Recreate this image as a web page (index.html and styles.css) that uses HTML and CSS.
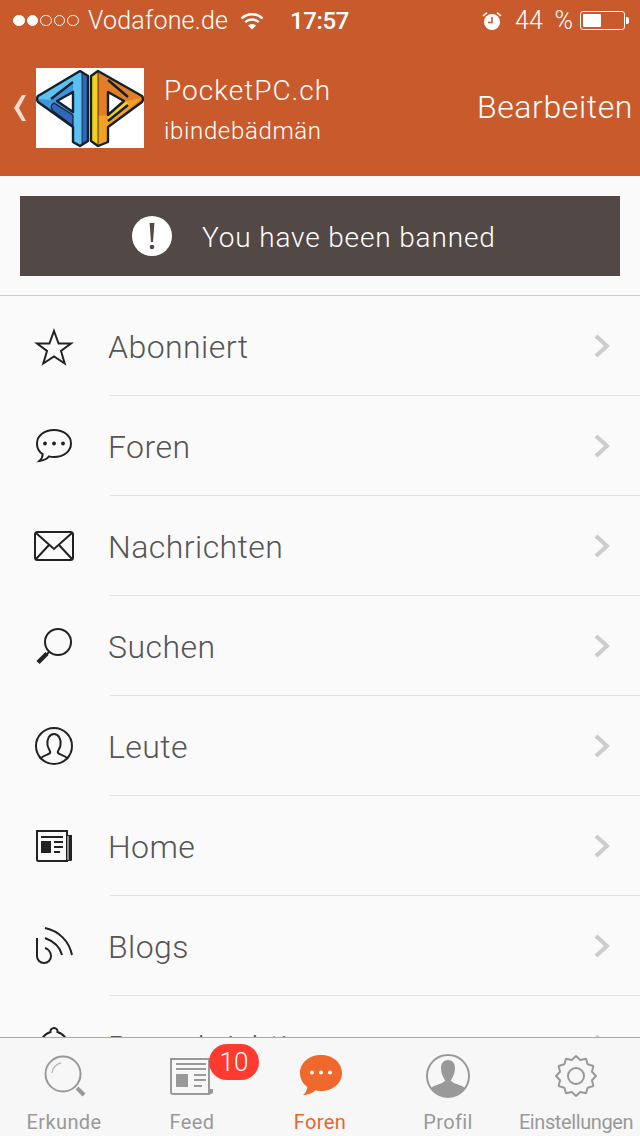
FILE: index.html
```html
<!DOCTYPE html>
<html lang="de">
<head>
<meta charset="utf-8">
<title>PocketPC.ch</title>
<link rel="stylesheet" href="styles.css">
</head>
<body>
<div class="app">
  <header class="header">
    <div class="status">
      <div class="signal"><i class="dot on"></i><i class="dot on"></i><i class="dot"></i><i class="dot"></i><i class="dot"></i></div>
      <span class="carrier">Vodafone.de</span>
      <svg class="wifi" viewBox="0 0 24 18"><path d="M1.500 6.500a15 15 0 0 1 21 0" fill="none" stroke="#fff" stroke-width="2.400"/><path d="M5.200 10.200a10 10 0 0 1 13.600 0" fill="none" stroke="#fff" stroke-width="2.400"/><path d="M12 17.500l-4-4a6 6 0 0 1 8 0z" fill="#fff"/></svg>
      <span class="time">17:57</span>
      <svg class="alarm" viewBox="0 0 20 20"><circle cx="10" cy="11" r="8" fill="#fff"/><path d="M10 6v5.500H6" fill="none" stroke="#c95a2b" stroke-width="1.600"/><path d="M1 5l4-3.400M19 5l-4-3.400" stroke="#fff" stroke-width="1.600" fill="none"/></svg>
      <span class="pct">44 %</span>
      <div class="battery"><div class="battery-fill"></div></div>
      <div class="battery-nub"></div>
    </div>
    <div class="nav">
      <svg class="back" viewBox="0 0 14 26"><path d="M9 0h4L6 13l7 13H9L1 13z" fill="#f9dccd"/></svg>
      <svg class="logo" viewBox="0 0 108 80">
        <rect width="108" height="80" fill="#fff"/>
        <path d="M44 3L2 28q-2 3 0 6l35 25v15l7 4 8-5V8z" fill="#3f95dc"/>
        <path d="M44 3L2 28q-1 2 0 3l13 1 22-18v62l7 2 2-1V5z" fill="#5cc0f2"/>
        <path d="M46 5l6 3v65l-6 4z" fill="#2f68b9"/>
        <path d="M18 35l19 12v11L17 43q-4-5 1-8z" fill="#2f68b9" stroke="#14202b" stroke-width="1.200"/>
        <path d="M37 24L21 33l16 11z" fill="#fff"/>
        <path d="M44 3L2 28q-2 3 0 6l35 25v15l7 4 8-5V8zM37 24L21 33l16 11zM37 14L15 31" fill="none" stroke="#14202b" stroke-width="2.400" stroke-linejoin="round"/>
        <path d="M46 5v72" stroke="#14202b" stroke-width=".8"/>
        <path d="M62 3l44 25q2 3 0 6L72 59v15l-10 4-7-5V8z" fill="#e37e27"/>
        <path d="M55 8l7-5v75l-7-5z" fill="#f6cf1f"/>
        <path d="M106 30L72 59v15l-10 4V48l10-1 18-14z" fill="#f3a122"/>
        <path d="M72 47l17-13q3 0 3 3L72 53z" fill="#f6cf1f"/>
        <path d="M72 24l16 9-16 14z" fill="#fff"/>
        <path d="M62 3l44 25q2 3 0 6L72 59v15l-10 4-7-5V8zM72 24l16 9-16 14zM72 12l20 17M72 53l20-16" fill="none" stroke="#14202b" stroke-width="2.400" stroke-linejoin="round"/>
        <path d="M62 4v73" stroke="#14202b" stroke-width=".8"/>
      </svg>
      <div class="titles">
        <div class="title">PocketPC.ch</div>
        <div class="subtitle">ibindebädmän</div>
      </div>
      <div class="edit">Bearbeiten</div>
    </div>
  </header>

  <main class="main">
    <div class="banner-wrap">
      <div class="banner">
        <svg class="alert" viewBox="0 0 40 40"><circle cx="20" cy="20" r="20" fill="#fff"/><path d="M17.600 7h4.800l-1.400 19h-2z" fill="#524846"/><circle cx="20" cy="31" r="2.300" fill="#524846"/></svg>
        <span class="banner-text">You have been banned</span>
      </div>
    </div>
    <ul class="list">
      <li class="row">
        <svg class="row-icon" viewBox="0 0 48 48"><path d="M24 9l4.600 12.500H41L31 29l3.700 12.500L24 34.500l-10.700 7L17 29 7 21.500h12.400z" fill="none" stroke="#222" stroke-width="2"/></svg>
        <div class="row-body"><span class="row-label">Abonniert</span><svg class="chev" viewBox="0 0 18 26"><path d="M3 3l11 10L3 23" fill="none" stroke="#ccc" stroke-width="4"/></svg></div>
      </li>
      <li class="row">
        <svg class="row-icon" viewBox="0 0 48 48"><path d="M24 8c9.500 0 17 5.600 17 13.500S33.500 35 24 35c-2 0-3.500-.2-5-.6-2.300 2.700-5.800 4.200-9.600 4.600 2-1.800 3.200-4 3.300-6.800C8.800 29.800 7 26 7 21.500 7 13.600 14.500 8 24 8z" fill="none" stroke="#222" stroke-width="2"/><circle cx="15" cy="21.500" r="1.900" fill="#222"/><circle cx="24" cy="21.500" r="1.900" fill="#222"/><circle cx="33" cy="21.500" r="1.900" fill="#222"/></svg>
        <div class="row-body"><span class="row-label">Foren</span><svg class="chev" viewBox="0 0 18 26"><path d="M3 3l11 10L3 23" fill="none" stroke="#ccc" stroke-width="4"/></svg></div>
      </li>
      <li class="row">
        <svg class="row-icon" viewBox="0 0 48 48"><rect x="5" y="10" width="38" height="28" rx="2.500" fill="none" stroke="#222" stroke-width="2"/><path d="M6 11l18 16 18-16M6 37l13-14M42 37L29 23" fill="none" stroke="#222" stroke-width="2"/></svg>
        <div class="row-body"><span class="row-label">Nachrichten</span><svg class="chev" viewBox="0 0 18 26"><path d="M3 3l11 10L3 23" fill="none" stroke="#ccc" stroke-width="4"/></svg></div>
      </li>
      <li class="row">
        <svg class="row-icon" viewBox="0 0 48 48"><circle cx="28" cy="20" r="13" fill="none" stroke="#222" stroke-width="2"/><path d="M19 30l-3 3" stroke="#222" stroke-width="2"/><path d="M17 31.500L8 40.500" stroke="#222" stroke-width="4.500"/></svg>
        <div class="row-body"><span class="row-label">Suchen</span><svg class="chev" viewBox="0 0 18 26"><path d="M3 3l11 10L3 23" fill="none" stroke="#ccc" stroke-width="4"/></svg></div>
      </li>
      <li class="row">
        <svg class="row-icon" viewBox="0 0 48 48"><circle cx="24" cy="24" r="18" fill="none" stroke="#222" stroke-width="2"/><path d="M10 37c3-4 8-4 10-6 1-2-2-4-2.500-8-.8-6 2-11 6.500-11s7.300 5 6.500 11c-.5 4-3.500 6-2.500 8 2 2 7 2 10 6" fill="none" stroke="#222" stroke-width="2"/></svg>
        <div class="row-body"><span class="row-label">Leute</span><svg class="chev" viewBox="0 0 18 26"><path d="M3 3l11 10L3 23" fill="none" stroke="#ccc" stroke-width="4"/></svg></div>
      </li>
      <li class="row">
        <svg class="row-icon" viewBox="0 0 48 48"><path d="M7 9h30v30H8.500Q7 39 7 37.500z" fill="none" stroke="#222" stroke-width="2"/><path d="M37 13h5v25q0 1-1 1h-4z" fill="#222"/><path d="M38 38V14" stroke="#fafafa" stroke-width="1"/><path d="M11 14h22v2H11zM24 19h9v2h-9zM24 24h9v2h-9zM24 29h6v2h-6z" fill="#222"/><rect x="11" y="19" width="10" height="12" fill="#222"/></svg>
        <div class="row-body"><span class="row-label">Home</span><svg class="chev" viewBox="0 0 18 26"><path d="M3 3l11 10L3 23" fill="none" stroke="#ccc" stroke-width="4"/></svg></div>
      </li>
      <li class="row">
        <svg class="row-icon" viewBox="0 0 48 48"><path d="M15 6c14 3 24 13 27 27" fill="none" stroke="#222" stroke-width="2"/><path d="M15 16c8 3 15 9 17 17" fill="none" stroke="#222" stroke-width="2"/><path d="M7 16v18c0 4 3 7 7 7s7-3 7-7c0-4-3-7-6-8" fill="none" stroke="#222" stroke-width="2"/></svg>
        <div class="row-body"><span class="row-label">Blogs</span><svg class="chev" viewBox="0 0 18 26"><path d="M3 3l11 10L3 23" fill="none" stroke="#ccc" stroke-width="4"/></svg></div>
      </li>
      <li class="row">
        <svg class="row-icon" viewBox="0 0 48 48"><path d="M24 6a3.500 3.500 0 0 1 3.500 4c6 2 9.500 6 9.500 13 0 7 2 11 4 15H7c2-4 4-8 4-15 0-7 3.500-11 9.500-13A3.500 3.500 0 0 1 24 6z" fill="none" stroke="#222" stroke-width="2"/></svg>
        <div class="row-body"><span class="row-label">Benachrichtigungen</span><svg class="chev" viewBox="0 0 18 26"><path d="M3 3l11 10L3 23" fill="none" stroke="#ccc" stroke-width="4"/></svg></div>
      </li>
    </ul>
  </main>

  <nav class="tabbar">
    <div class="tab">
      <svg class="tab-icon" viewBox="0 0 44 44"><circle cx="21" cy="20" r="17.500" fill="none" stroke="#999" stroke-width="2"/><path d="M10 19a11 11 0 0 1 9-10" fill="none" stroke="#bbb" stroke-width="1.500"/><path d="M35 34l7 7" stroke="#999" stroke-width="4"/></svg>
      <span class="tab-label">Erkunde</span>
    </div>
    <div class="tab">
      <svg class="tab-icon" viewBox="0 0 44 44"><path d="M1 5h38v35H3q-2 0-2-2z" fill="none" stroke="#999" stroke-width="2"/><path d="M39 35h4v3q0 2-2 2h-2z" fill="#999"/><path d="M6 9h30v2H6zM6 14h30v2H6zM24 20h12v2H24zM24 25h12v2H24zM24 31h8v2h-8z" fill="#999"/><rect x="6" y="20" width="12" height="13" fill="#999"/></svg>
      <span class="tab-label">Feed</span>
      <span class="badge">10</span>
    </div>
    <div class="tab tab-active">
      <svg class="tab-icon" viewBox="0 0 44 44"><path d="M23 1c11.600 0 21 7.500 21 18s-9.400 18-21 18c-2 0-4-.2-5.500-.7C14.500 39.500 10 41 5 41c2.500-2 4-4.500 4.300-8C4.500 29.500 2 24.500 2 19 2 8.500 11.400 1 23 1z" fill="#f0682c"/><circle cx="14" cy="18.500" r="2" fill="#fff"/><circle cx="23" cy="18.500" r="2" fill="#fff"/><circle cx="32" cy="18.500" r="2" fill="#fff"/></svg>
      <span class="tab-label">Foren</span>
    </div>
    <div class="tab">
      <svg class="tab-icon" viewBox="0 0 44 44"><circle cx="22" cy="22" r="21" fill="none" stroke="#999" stroke-width="2"/><path d="M5 34c3-3 11-4 14-7 .5-1.500-4-5-4-13 0-5 3-8 7-8s7 3 7 8c0 8-4.500 11.500-4 13 3 3 11 4 14 7-4 5-11 9-17 9S9 39 5 34z" fill="#999"/></svg>
      <span class="tab-label">Profil</span>
    </div>
    <div class="tab">
      <svg class="tab-icon" viewBox="0 0 44 44"><path d="M22 2l4.270 4.060L32 4.680l1.670 5.650L39.320 12l-1.380 5.730L42 22l-4.060 4.270L39.320 32l-5.650 1.670L32 39.320l-5.730-1.380L22 42l-4.270-4.060L12 39.320l-1.670-5.650L4.680 32l1.380-5.730L2 22l4.060-4.270L4.680 12l5.650-1.670L12 4.680l5.730 1.380z" fill="none" stroke="#999" stroke-width="2" stroke-linejoin="round"/><circle cx="22" cy="22" r="8" fill="none" stroke="#999" stroke-width="2"/></svg>
      <span class="tab-label tab-label-long">Einstellungen</span>
    </div>
  </nav>
</div>
</body>
</html>
```
FILE: styles.css
```css
* { box-sizing: border-box; }
html, body { margin: 0; padding: 0; }
body { font-family: Roboto, "Liberation Sans", sans-serif; font-weight: 300; background: #fafafa; }
.app { width: 640px; height: 1136px; display: flex; flex-direction: column; overflow: hidden; }

.header { height: 176px; background: #c95a2b; color: #fff; flex: none; }
.status { height: 40px; padding-top: 1px; display: flex; align-items: center; padding-left: 13px; font-size: 25px; letter-spacing: 0.2px; }
.signal { display: flex; gap: 2px; width: 75px; }
.dot { width: 11.500px; height: 11.500px; border-radius: 50%; border: 1px solid #fff; display: block; }
.dot.on { background: #fff; }
.carrier { width: 152px; }
.wifi { width: 24px; height: 18px; margin-right: 26px; }
.time { font-weight: 500; font-size: 24px; letter-spacing: -0.4px; width: 192px; }
.alarm { width: 20px; height: 20px; margin-right: 13px; }
.pct { width: 65px; word-spacing: 5px; }
.battery { width: 45px; height: 19px; border: 1px solid #fff; border-radius: 3px; padding: 2px; }
.battery-fill { width: 18px; height: 100%; background: #fff; border-radius: 1px; }
.battery-nub { width: 3px; height: 7px; background: #fff; margin-left: 1px; border-radius: 0 2px 2px 0; }

.nav { height: 136px; display: flex; align-items: center; }
.back { width: 14px; height: 26px; margin-left: 13px; margin-right: 9px; }
.logo { width: 108px; height: 80px; display: block; }
.titles { margin-left: 20px; flex: 1; padding-top: 6px; }
.title { font-size: 28px; line-height: 40px; letter-spacing: 1px; }
.subtitle { font-size: 24px; line-height: 40px; letter-spacing: 0.65px; }
.edit { font-size: 32px; margin-right: 7px; letter-spacing: 0.6px; padding-bottom: 3px; }

.main { flex: 1; min-height: 0; overflow: hidden; }
.banner-wrap { padding: 20px; height: 120px; border-bottom: 1px solid #ccc; }
.banner { height: 80px; background: #524846; color: #fff; display: flex; align-items: center; padding-left: 112px; }
.alert { width: 40px; height: 40px; margin-right: 30px; }
.banner-text { font-size: 28px; letter-spacing: 0.85px; padding-top: 2px; }

.list { list-style: none; margin: 0; padding: 0; }
.row { height: 100px; display: flex; align-items: center; padding-left: 30px; }
.row-icon { width: 48px; height: 48px; flex: none; }
.row-body { flex: 1; height: 100px; margin-left: 32px; border-bottom: 1px solid #e2e2e2; display: flex; align-items: center; justify-content: space-between; padding-right: 29px; }
.row-label { font-size: 32px; color: #555; margin-left: -2px; letter-spacing: 0.45px; padding-top: 2px; }
.chev { width: 18px; height: 26px; }

.tabbar { height: 99px; flex: none; display: flex; background: #f7f7f7; border-top: 1px solid #aaa; }
.tab { width: 128px; position: relative; display: flex; flex-direction: column; align-items: center; padding-top: 16px; color: #999; }
.tab-icon { width: 44px; height: 44px; display: block; }
.tab-label { font-size: 20px; line-height: 24px; margin-top: 12px; font-weight: 400; white-space: nowrap; letter-spacing: 0.4px; }
.tab-label-long { letter-spacing: -0.4px; }
.tab-active { color: #e8652f; }
.badge { position: absolute; left: 81px; top: 6px; width: 50px; height: 36px; border-radius: 18px; background: #ff3b30; color: #fff; font-size: 26px; line-height: 36px; text-align: center; }
```
